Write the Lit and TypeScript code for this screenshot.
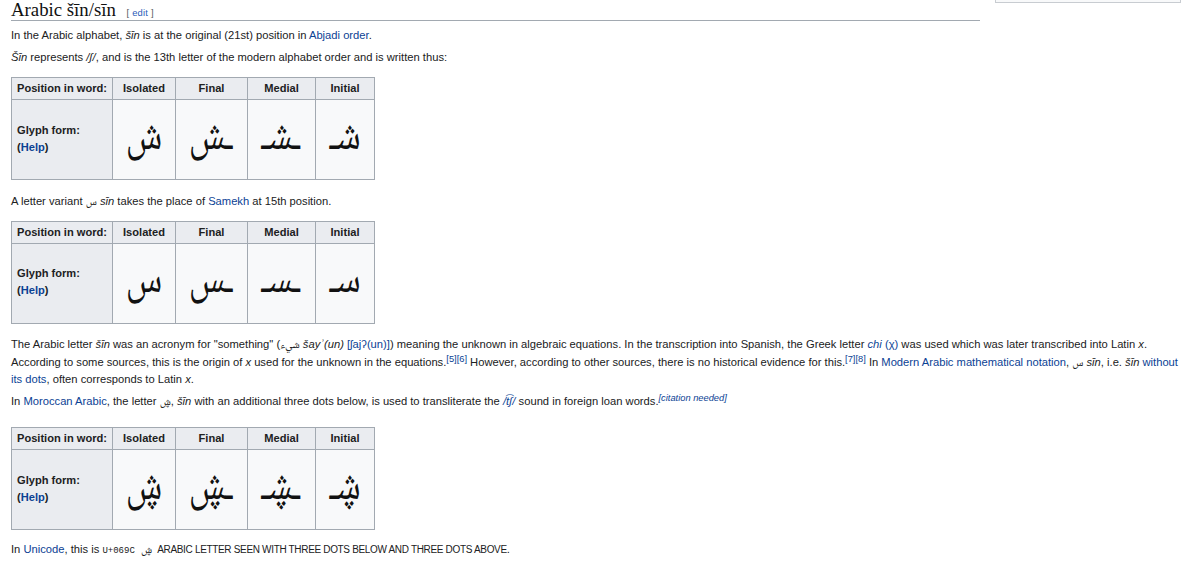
import { LitElement, html, css } from "lit";
import { customElement } from "lit/decorators.js";

const rows = [
  ["ش", "ـش", "ـشـ", "شـ"],
  ["س", "ـس", "ـسـ", "سـ"],
  ["ڜ", "ـڜ", "ـڜـ", "ڜـ"],
];

@customElement("app-root")
export class AppRoot extends LitElement {
  static styles = css`
    :host { display: block; width: 1192px; height: 561px; overflow: hidden; position: relative; background: #fff; color: #202122; font: 11.2px/17.5px "Liberation Sans", Arial, sans-serif; }
    .page { padding-left: 11px; width: 1175px; }
    .box { position: absolute; left: 995px; top: -10px; width: 184px; height: 11px; border: 1px solid #c8ccd1; background: #f8f9fa; }
    h2 { margin: 0 0 6.25px; width: 969px; height: 21px; box-sizing: border-box; border-bottom: 1px solid #a2a9b1; font: 400 18.8px/20px "Liberation Serif", serif; color: #111; white-space: nowrap; }
    .edit { font: 9.4px/1 "Liberation Sans", sans-serif; margin-left: 6px; color: #54595d; letter-spacing: .2px; }
    .edit a { color: #2a5bb8; }
    p { margin: 0 0 4.5px; white-space: nowrap; }
    a { color: #0b4294; text-decoration: none; }
    i { font-style: italic; }
    sup { font-size: 9.3px; line-height: 0; vertical-align: 4.5px; }
    .ar { font-family: "Noto Naskh Arabic", "Noto Sans Arabic", "DejaVu Sans", sans-serif; font-size: 11px; line-height: 0; }
    .mono { font: 9px/0 "Liberation Mono", monospace; margin-right: 3px; }
    .caps { font-size: 10px; letter-spacing: -.33px; margin-left: 2px; }
    table { border-collapse: collapse; margin: 10.5px 0 12.4px; table-layout: fixed; width: 364px; }
    p.tail { margin-bottom: 16.5px; }
    p.last { margin-top: -1px; }
    th, td { border: 1px solid #a2a9b1; padding: 0; }
    th { background: #eaecf0; height: 21px; font-weight: 700; font-size: 11.1px; text-align: center; line-height: 17px; }
    th.side { text-align: left; padding-left: 5px; }
    td { background: #f8f9fa; height: 79px; text-align: center; color: #111; overflow: hidden; font: 36px/40px "Noto Naskh Arabic", "Noto Sans Arabic", "DejaVu Sans", sans-serif; }
    td span { display: inline-block; transform: scale(1, 1.25); }
    .c0 { width: 101px; } .c1 { width: 63px; } .c2 { width: 72px; } .c3 { width: 68px; } .c4 { width: 59px; }
    th.row-label { line-height: 17px; height: 77px; padding-bottom: 2px; }
    .row-label a { font-weight: 700; }
  `;

  table(g: string[]) {
    return html`<table>
      <colgroup><col class="c0"><col class="c1"><col class="c2"><col class="c3"><col class="c4"></colgroup>
      <tr><th class="side">Position in word:</th><th>Isolated</th><th>Final</th><th>Medial</th><th>Initial</th></tr>
      <tr><th class="side row-label">Glyph form:<br>(<a>Help</a>)</th>${g.map((c) => html`<td lang="ar" dir="rtl"><span>${c}</span></td>`)}</tr>
    </table>`;
  }

  render() {
    return html`<div class="box"></div>
    <div class="page">
      <h2>Arabic šīn/sīn <span class="edit">[ <a>edit</a> ]</span></h2>
      <p>In the Arabic alphabet, <i>šīn</i> is at the original (21st) position in <a>Abjadi order</a>.</p>
      <p><i>Šīn</i> represents <i>/ʃ/</i>, and is the 13th letter of the modern alphabet order and is written thus:</p>
      ${this.table(rows[0])}
      <p>A letter variant <span class="ar">س</span> <i>sīn</i> takes the place of <a>Samekh</a> at 15th position.</p>
      ${this.table(rows[1])}
      <p>The Arabic letter <i>šīn</i> was an acronym for "something" (<span class="ar">شيء</span> <i>šayʾ(un)</i> <a>[ʃajʔ(un)]</a>) meaning the unknown in algebraic equations. In the transcription into Spanish, the Greek letter <a><i>chi</i> (χ)</a> was used which was later transcribed into Latin <i>x</i>.<br>According to some sources, this is the origin of <i>x</i> used for the unknown in the equations.<sup><a>[5][6]</a></sup> However, according to other sources, there is no historical evidence for this.<sup><a>[7][8]</a></sup> In <a>Modern Arabic mathematical notation</a>, <span class="ar">س</span> <i>sīn</i>, i.e. <i>šīn</i> <a>without<br>its dots</a>, often corresponds to Latin <i>x</i>.</p>
      <p class="tail">In <a>Moroccan Arabic</a>, the letter <span class="ar">ڜ</span>, <i>šīn</i> with an additional three dots below, is used to transliterate the <a><i>/t͡ʃ/</i></a> sound in foreign loan words.<sup><i><a>[citation needed]</a></i></sup></p>
      ${this.table(rows[2])}
      <p class="last">In <a>Unicode</a>, this is <span class="mono">U+069C</span> <span class="ar">ڜ</span> <span class="caps">ARABIC LETTER SEEN WITH THREE DOTS BELOW AND THREE DOTS ABOVE</span>.</p>
    </div>`;
  }
}
